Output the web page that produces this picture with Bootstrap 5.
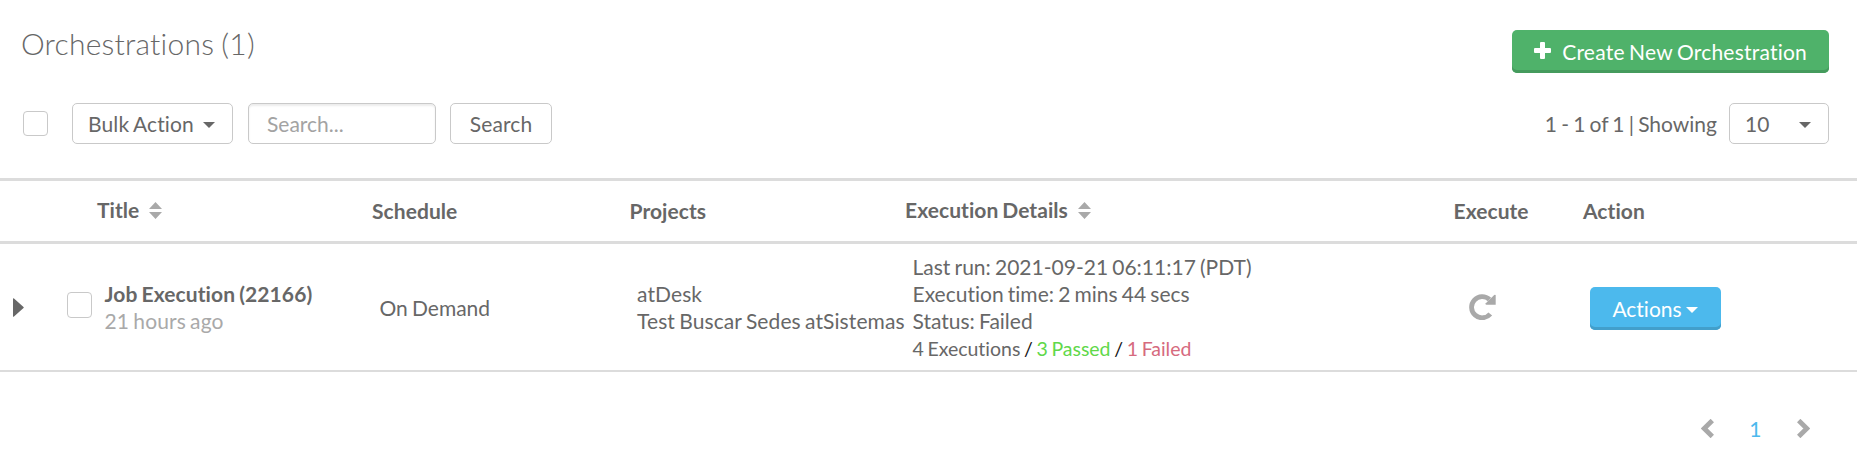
<!DOCTYPE html>
<html lang="en">
<head>
<meta charset="utf-8">
<meta name="viewport" content="width=device-width, initial-scale=1">
<title>Orchestrations</title>
<link href="https://cdn.jsdelivr.net/npm/bootstrap@5.3.0/dist/css/bootstrap.min.css" rel="stylesheet">
<style>
  body { font-family: Lato, "Liberation Sans", sans-serif; font-size: 21px; line-height: 27px; color: #676767; background: #fff; font-variant-ligatures: none; word-spacing: -1.2px; }
  button, input { word-spacing: inherit; font-variant-ligatures: inherit; }
  .page-top { padding: 30px 28px 0 21px; height: 103px; }
  .page-title { font-size: 30px; font-weight: 300; line-height: 36px; margin: -5px 0 0; color: #676767; letter-spacing: .22px; }
  .btn { --bs-btn-font-size: 21px; --bs-btn-line-height: 27px; --bs-btn-border-radius: 5px; white-space: nowrap; }
  .btn-raised { height: 43px; border: 0; padding: 8px 22px; color: #fff; }
  .btn-create { background: #4fb26a; box-shadow: inset 0 -3px #459b5d; width: 317px; letter-spacing: .22px; }
  .btn-create svg { margin-top: -2px; }
  .btn-actions { background: #4cb9ed; box-shadow: inset 0 -3px #429fcb; width: 131px; padding: 8px 0; margin: 2px 0 0 -1px; }
  .btn-plain, .field { height: 41px; border: 1px solid #c9c9c9; border-radius: 5px; color: #676767; background: #fff; padding: 6px 16px; }
  .toolbar { padding: 0 28px 0 23px; height: 75px; }
  .bulk { width: 161px; margin-left: 24px; padding: 6px 17px 6px 15px; letter-spacing: .15px; }
  .field { font-size: 21px; line-height: 27px; width: 188px; margin-left: 15px; padding: 6px 18px; box-shadow: inset 0 2px 2px rgba(0,0,0,.075); }
  .field::placeholder { color: #a3a3a3; opacity: 1; }
  .find { width: 102px; margin-left: 14px; padding: 6px 0; letter-spacing: .1px; }
  .per-page { width: 100px; margin-left: 12px; padding: 6px 17px 6px 15px; }
  .form-check-input.tick { margin: 0; width: 25px; height: 25px; border: 1px solid #c9c9c9; border-radius: 4px; }
  .form-check-input.row-tick { height: 26px; margin: -4px 0 0 43px; }
  .caret { display: inline-block; border: 6px solid transparent; border-top-color: currentColor; border-bottom: 0; margin-top: 3px; }
  .grid-row { display: grid; grid-template-columns: 97px 275px 257.500px 275.500px 548.500px 129.500px 1fr; }
  .grid-head { height: 66px; border-top: 3px solid #dcdcdc; border-bottom: 3px solid #dcdcdc; font-weight: 700; letter-spacing: .06px; }
  .grid-head > * { margin-top: -2px; }
  .grid-head > .sortable { margin-top: -4px; }
  .sorter { margin: 3px 0 0 10px; }
  .grid-body { height: 128px; border-bottom: 2px solid #dcdcdc; }
  .grid-body > * { padding-left: 7.500px; white-space: nowrap; }
  .grid-body > .lead-cell { padding: 0 0 0 13px; }
  .grid-body > .rerun { padding-left: 15px; }
  .job, .projects { letter-spacing: .1px; }
  .muted { color: #a9a9a9; }
  .totals { font-size: 19.500px; word-spacing: -1.300px; position: relative; top: 1px; letter-spacing: -.02px; }
  .slash { color: #111; }
  .passed { color: #5fd84a; }
  .failed { color: #d66a7e; }
  .pager { height: 85px; padding: 27px 47px 0 0; gap: 35.500px; }
  .pager a { color: #4cb9ed; text-decoration: none; }
  svg { display: block; flex-shrink: 0; }
</style>
</head>
<body>
<header class="page-top d-flex justify-content-between align-items-start">
  <h1 class="page-title">Orchestrations (1)</h1>
  <button class="btn btn-raised btn-create d-flex align-items-center" type="button">
    <svg width="17" height="17" viewBox="0 0 17 17" fill="#fff"><path d="M7 0h3a1 1 0 0 1 1 1v5h5a1 1 0 0 1 1 1v3a1 1 0 0 1-1 1h-5v5a1 1 0 0 1-1 1H7a1 1 0 0 1-1-1v-5H1a1 1 0 0 1-1-1V7a1 1 0 0 1 1-1h5V1a1 1 0 0 1 1-1z"/></svg>
    <span class="ms-auto">Create New Orchestration</span>
  </button>
</header>

<div class="toolbar d-flex align-items-start">
  <div class="d-flex align-items-center">
    <input class="form-check-input tick" type="checkbox" aria-label="Select all">
    <button class="btn btn-plain bulk d-flex align-items-center" type="button">Bulk Action<span class="caret ms-auto"></span></button>
    <input class="field" type="text" placeholder="Search...">
    <button class="btn btn-plain find" type="button">Search</button>
  </div>
  <div class="d-flex align-items-center ms-auto">
    <span>1 - 1 of 1 | Showing</span>
    <button class="btn btn-plain per-page d-flex align-items-center" type="button">10<span class="caret ms-auto"></span></button>
  </div>
</div>

<main>
  <div class="grid-row grid-head align-items-center">
    <span></span>
    <span class="sortable d-flex align-items-center">Title
      <svg class="sorter" width="13" height="17" viewBox="0 0 13 17" fill="#a9a9a9"><path d="M0 7 6.500 0 13 7zM0 10h13l-6.500 7z"/></svg></span>
    <span>Schedule</span>
    <span>Projects</span>
    <span class="sortable d-flex align-items-center">Execution Details
      <svg class="sorter" width="13" height="17" viewBox="0 0 13 17" fill="#a9a9a9"><path d="M0 7 6.500 0 13 7zM0 10h13l-6.500 7z"/></svg></span>
    <span>Execute</span>
    <span>Action</span>
  </div>
  <div class="grid-row grid-body align-items-center">
    <div class="lead-cell d-flex align-items-center">
      <svg width="11" height="19" viewBox="0 0 11 19" fill="#676767"><path d="M0 .8Q0-.3 1 .6L10.500 9Q11 9.500 10.500 10L1 18.500Q0 19.200 0 18.200z"/></svg>
      <input class="form-check-input tick row-tick flex-shrink-0" type="checkbox" aria-label="Select job">
    </div>
    <div class="job"><strong>Job Execution (22166)</strong><div class="muted">21 hours ago</div></div>
    <div>On Demand</div>
    <div class="projects">atDesk<br>Test Buscar Sedes atSistemas</div>
    <div>Last run: 2021-09-21 06:11:17 (PDT)<br>Execution time: 2 mins 44 secs<br>Status: Failed
      <div class="totals">4 Executions <span class="slash">/</span> <span class="passed">3 Passed</span> <span class="slash">/</span> <span class="failed">1 Failed</span></div>
    </div>
    <div class="rerun">
      <svg width="27" height="26" viewBox="0 0 27 26"><path d="M21.300 20A10.600 10.600 0 1 1 20.500 5.500" fill="none" stroke="#a9a9a9" stroke-width="4.800"/><path d="M26.700 1.500v9.300h-9.300q-1.500-.4-.6-1.600L25.200 1.100q1.200-.7 1.500.4z" fill="#a9a9a9"/></svg>
    </div>
    <div><button class="btn btn-raised btn-actions d-flex align-items-center justify-content-center" type="button">Actions<span class="caret ms-1"></span></button></div>
  </div>
</main>

<nav class="pager d-flex justify-content-end align-items-center" aria-label="Pages">
  <svg width="13" height="19" viewBox="0 0 13 19" fill="none" stroke="#a9a9a9" stroke-width="4.800"><path d="M11.300 1.500 3.200 9.500l8.100 8"/></svg>
  <a href="#">1</a>
  <svg width="13" height="19" viewBox="0 0 13 19" fill="none" stroke="#a9a9a9" stroke-width="4.800"><path d="m1.700 1.500 8.100 8-8.100 8"/></svg>
</nav>
<script src="https://cdn.jsdelivr.net/npm/bootstrap@5.3.0/dist/js/bootstrap.bundle.min.js"></script>
</body>
</html>
